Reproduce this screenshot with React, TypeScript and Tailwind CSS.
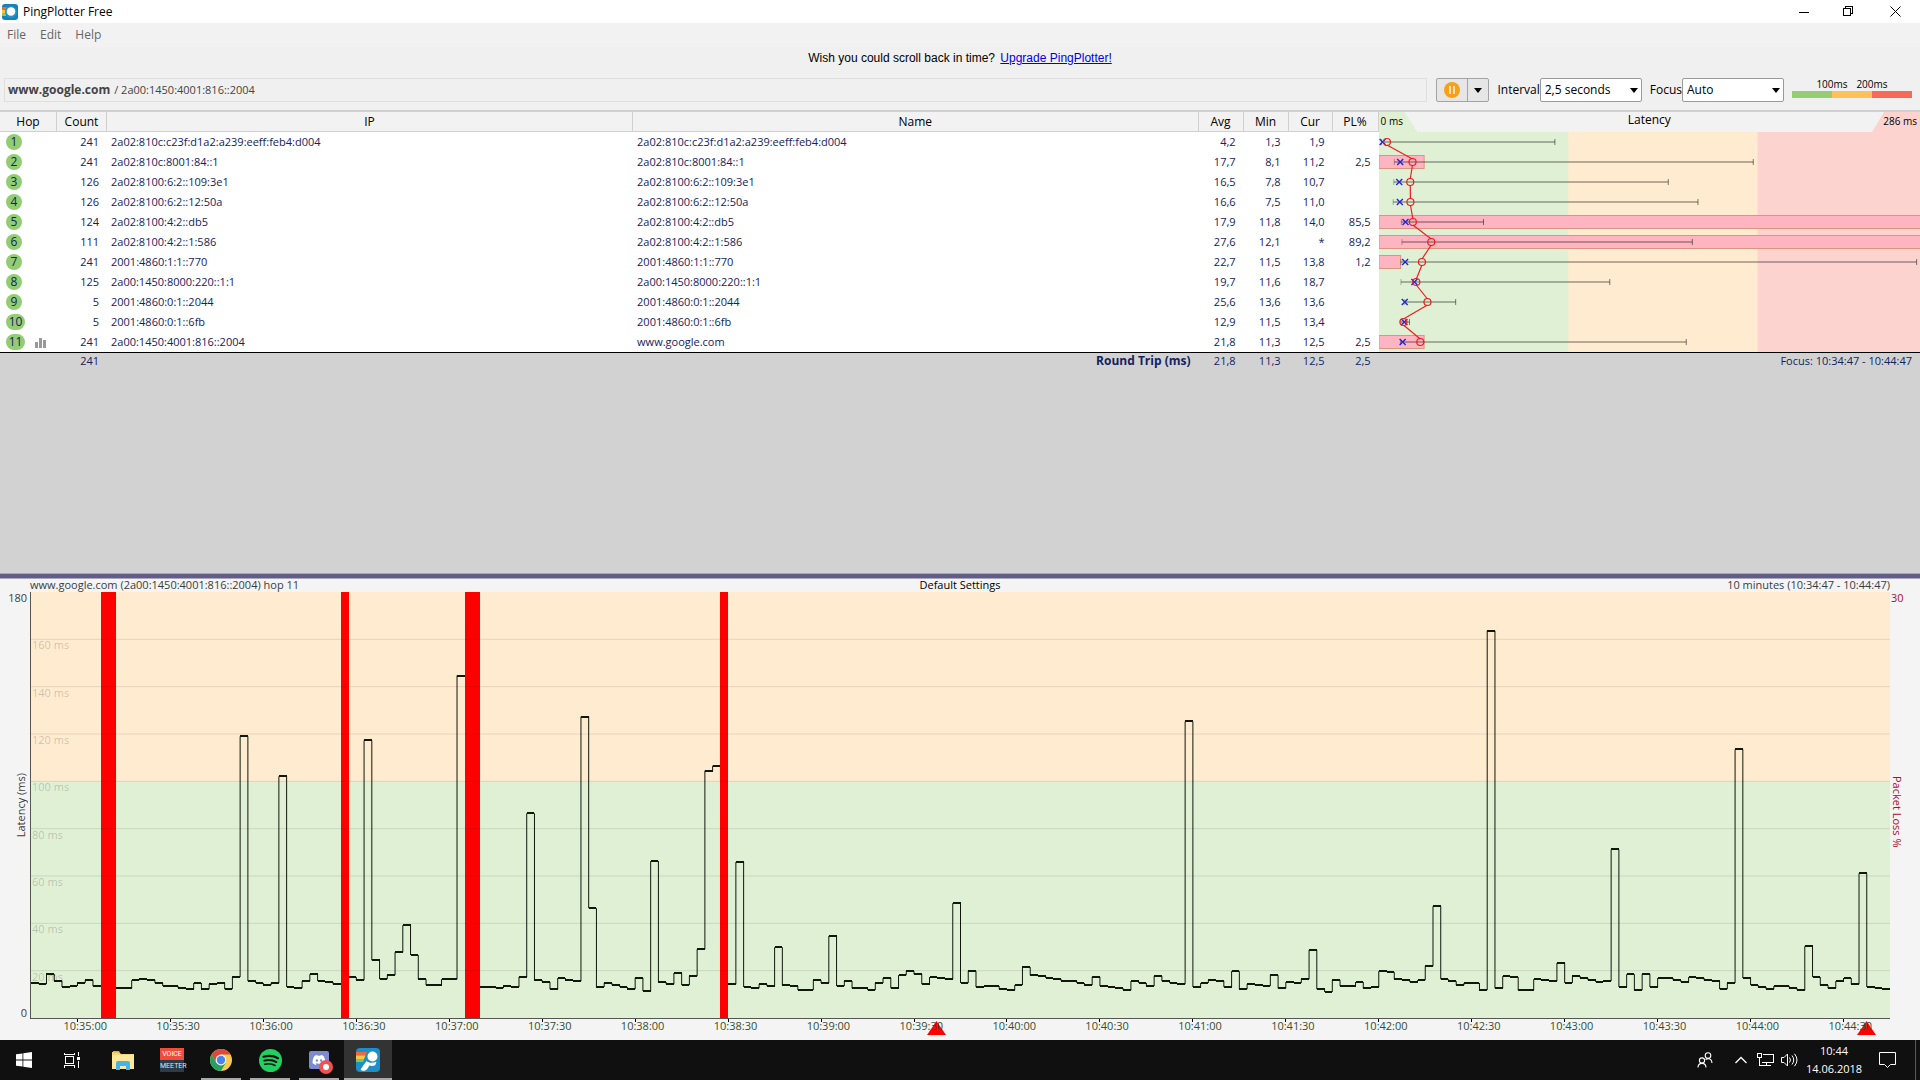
import React from "react";
import { FaDiscord } from "react-icons/fa";

const LOSS = -1;

// One latency value (ms) per 2.5 second sample, LOSS where the packet was lost.
const SAMPLES: number[] = [
  14.9, 14.3, 18.6, 15.7, 13.1, 13.5, 14.8, 16, 13.5, LOSS, LOSS, 12.6, 12.6, 16, 16.4, 16, 14.8, 13.5, 13.5, 12.6,
  12.2, 14.8, 12.2, 14.3, 14.8, 12.2, 17.3, 119, 15.6, 14.8, 13.9, 14.8, 102.1, 13.1, 12.6, 15.6, 18.5, 15.6, 15.2, 14.3,
  LOSS, 17.3, 16, 117.3, 24.4, 16.4, 18.1, 27.8, 39.2, 26.6, 16.4, 13.9, 13.9, 16.4, 16.4, 144.7, LOSS, LOSS, 13.1, 13.1,
  12.6, 13.5, 13.1, 17.3, 86.5, 16, 15.2, 12.2, 16.9, 16, 15.6, 127.3, 46.4, 13.1, 14.8, 13.9, 13.1, 12.2, 16.9, 11.4,
  66.3, 15.2, 14.3, 19, 13.9, 17.7, 29.1, 104.5, 106.6, LOSS, 14.3, 65.9, 13.1, 12.6, 14.3, 13.5, 29.9, 13.9, 13.5, 11.8,
  11.8, 16, 14.8, 34.7, 13.5, 15.6, 12.6, 12.6, 11.8, 14.8, 16.9, 12.6, 18.1, 19.8, 18.5, 14.3, 17.3, 16.9, 16.4, 48.5,
  14.8, 19.8, 13.1, 13.5, 13.5, 12.2, 11.8, 13.9, 21.5, 18.1, 17.7, 16.9, 16.4, 15.6, 15.6, 14.8, 13.9, 17.3, 13.5, 13.1,
  12.6, 11.8, 15.6, 14.8, 13.5, 17.7, 15.6, 14.8, 14.3, 125.3, 13.1, 14.8, 16, 15.6, 13.1, 19.8, 12.2, 14.3, 13.9, 13.5,
  18.1, 12.6, 15.2, 14.8, 16.4, 28.7, 12.2, 11, 16, 13.5, 13.5, 15.2, 12.6, 13.1, 19.8, 19.4, 16.4, 16, 15.2, 16,
  21.9, 47.2, 16.4, 15.6, 13.9, 14.8, 14.8, 11.8, 163.6, 12.6, 17.7, 17.3, 11.8, 11.8, 16.4, 16, 15.6, 23.2, 14.8, 17.7,
  16.9, 16, 15.2, 15.6, 71.2, 13.1, 18.5, 11.8, 18.5, 13.1, 16.9, 16.9, 16, 15.2, 17.3, 16.9, 16, 15.6, 12.2, 14.8,
  113.5, 16.9, 13.9, 13.1, 12.2, 13.5, 13.5, 12.6, 11.8, 30.3, 17.3, 13.9, 12.6, 15.6, 16.9, 14.3, 61.1, 13.1, 12.6, 12.2,
];

type Hop = {
  count: number;
  ip: string;
  name: string;
  avg: number;
  min: number;
  cur: number | null;
  pl: number;
  max: number;
};

const HOPS: Hop[] = [
  { count: 241, ip: "2a02:810c:c23f:d1a2:a239:eeff:feb4:d004", name: "2a02:810c:c23f:d1a2:a239:eeff:feb4:d004", avg: 4.2, min: 1.3, cur: 1.9, pl: 0, max: 92.9 },
  { count: 241, ip: "2a02:810c:8001:84::1", name: "2a02:810c:8001:84::1", avg: 17.7, min: 8.1, cur: 11.2, pl: 2.5, max: 197.7 },
  { count: 126, ip: "2a02:8100:6:2::109:3e1", name: "2a02:8100:6:2::109:3e1", avg: 16.5, min: 7.8, cur: 10.7, pl: 0, max: 152.8 },
  { count: 126, ip: "2a02:8100:6:2::12:50a", name: "2a02:8100:6:2::12:50a", avg: 16.6, min: 7.5, cur: 11, pl: 0, max: 168.5 },
  { count: 124, ip: "2a02:8100:4:2::db5", name: "2a02:8100:4:2::db5", avg: 17.9, min: 11.8, cur: 14, pl: 85.5, max: 55.2 },
  { count: 111, ip: "2a02:8100:4:2::1:586", name: "2a02:8100:4:2::1:586", avg: 27.6, min: 12.1, cur: null, pl: 89.2, max: 165.5 },
  { count: 241, ip: "2001:4860:1:1::770", name: "2001:4860:1:1::770", avg: 22.7, min: 11.5, cur: 13.8, pl: 1.2, max: 284 },
  { count: 125, ip: "2a00:1450:8000:220::1:1", name: "2a00:1450:8000:220::1:1", avg: 19.7, min: 11.6, cur: 18.7, pl: 0, max: 121.9 },
  { count: 5, ip: "2001:4860:0:1::2044", name: "2001:4860:0:1::2044", avg: 25.6, min: 13.6, cur: 13.6, pl: 0, max: 40.5 },
  { count: 5, ip: "2001:4860:0:1::6fb", name: "2001:4860:0:1::6fb", avg: 12.9, min: 11.5, cur: 13.4, pl: 0, max: 16.1 },
  { count: 241, ip: "2a00:1450:4001:816::2004", name: "www.google.com", avg: 21.8, min: 11.3, cur: 12.5, pl: 2.5, max: 162.3 },
];

const comma = (n: number) => n.toFixed(1).replace(".", ",");

function PingLogo({ size }: { size: number }) {
  return (
    <svg width={size} height={size} viewBox="0 0 24 24" aria-hidden="true">
      <rect width="24" height="24" rx="4" fill="#1b8fc6" />
      <path d="M0 4h11l-1.500 3.500H0z" fill="#ee6a3c" />
      <path d="M0 7.500h9.500L8 11H0z" fill="#f6c544" />
      <path d="M0 11h8l-1 3H0z" fill="#7fc466" />
      <circle cx="16.500" cy="8.500" r="5" fill="#fff" />
      <path d="M4.500 21.500L10.500 13c2 1.800 5.500 2.600 10 .8l-1.300 3.500c-2.200.9-4.200.9-6 .2-.9 2-1.700 3.600-3.200 4.500-1.800 1.200-4.200 1.200-5.500-.5z" fill="#fff" />
    </svg>
  );
}

function TitleLogo() {
  return (
    <svg width="16" height="16" viewBox="0 0 16 16" aria-hidden="true">
      <rect width="16" height="16" rx="3" fill="#1583b8" />
      <path d="M0 3h5v3H0z" fill="#f0673a" />
      <path d="M0 6h4v3H0z" fill="#f6c544" />
      <path d="M0 9h4v3H0z" fill="#8cc668" />
      <circle cx="9" cy="8" r="6" fill="#1f95c9" />
      <circle cx="9" cy="7.500" r="4.300" fill="#fff" />
    </svg>
  );
}

function TitleBar() {
  return (
    <header className="flex h-[23px] items-center bg-white pl-0.5 text-[12px] text-black">
      <TitleLogo />
      <h1 className="ml-[5px] font-normal">PingPlotter Free</h1>
      <div className="ml-auto flex h-full">
        <button aria-label="Minimize" className="flex w-[45px] items-center justify-center">
          <svg width="10" height="10" viewBox="0 0 10 10" stroke="#000" fill="none" shapeRendering="crispEdges"><path d="M0 5.500h10" /></svg>
        </button>
        <button aria-label="Restore" className="flex w-[45px] items-center justify-center">
          <svg width="11" height="11" viewBox="0 0 11 11" stroke="#000" fill="none" shapeRendering="crispEdges"><path d="M.5 2.500h7v7h-7zM2.500 2.500v-2h7v7h-2" /></svg>
        </button>
        <button aria-label="Close" className="flex w-[49px] items-center justify-center">
          <svg width="11" height="11" viewBox="0 0 11 11" stroke="#000" fill="none"><path d="M.5.5l10 10M10.500.5l-10 10" /></svg>
        </button>
      </div>
    </header>
  );
}

function Caret() {
  return (
    <svg width="8" height="5" viewBox="0 0 8 5" aria-hidden="true"><path d="M0 0h8L4 5z" fill="#000" /></svg>
  );
}

function DropDown({ id, label, value }: { id: string; label: string; value: string }) {
  return (
    <div className="flex items-center">
      <label htmlFor={id}>{label}</label>
      <div className="relative flex items-center">
        <select id={id} defaultValue={value} className="h-6 w-[102px] appearance-none rounded-xs border border-[#9a9a9a] bg-white pl-1 text-[12px]">
          <option>{value}</option>
        </select>
        <span className="pointer-events-none absolute right-1"><Caret /></span>
      </div>
    </div>
  );
}

function Toolbar() {
  return (
    <div className="flex h-8 items-start pl-1 pr-2 text-[12px] text-black">
      <div className="flex h-6 flex-1 items-center border border-[#dfdfdf] px-[3px] text-[#444]">
        <strong className="mr-1">www.google.com</strong><span className="text-[11px]">/ 2a00:1450:4001:816::2004</span>
      </div>
      <div className="ml-[9px] flex h-6 rounded-xs border border-[#a3a3a3] bg-[#e6e6e6]">
        <button aria-label="Pause" className="flex w-[31px] items-center justify-center border-r border-[#a3a3a3]">
          <svg width="16" height="16" viewBox="0 0 16 16">
            <circle cx="8" cy="8" r="8" fill="#f7a11a" />
            <path d="M5 4h2v8H5zM9 4h2v8H9z" fill="#fbe3b8" />
          </svg>
        </button>
        <button aria-label="Pause options" className="flex w-5 items-center justify-center"><Caret /></button>
      </div>
      <div className="ml-2 flex gap-2">
        <DropDown id="interval" label="Interval" value="2,5 seconds" />
        <DropDown id="focus" label="Focus" value="Auto" />
      </div>
      <div className="ml-2 w-[120px] text-[10px] leading-[13px]">
        <div className="flex justify-center"><span className="w-10 text-center">100ms</span><span className="w-10 text-center">200ms</span></div>
        <div className="flex h-[7px]">
          <i className="flex-1 bg-[#95cc75]" /><i className="flex-1 bg-[#fcc158]" /><i className="flex-1 bg-[#f66a57]" />
        </div>
      </div>
    </div>
  );
}

const pctMs = (ms: number) => `${(ms / 286) * 100}%`;
const rowY = (i: number) => i * 20 + 10;

function HopGraph() {
  return (
    <svg className="block h-[220px] w-full" role="img" aria-label="Latency per hop">
      <rect width="100%" height="220" fill="#dff0d5" />
      <rect x={pctMs(100)} width={pctMs(100)} height="220" fill="#ffebcf" />
      <rect x={pctMs(200)} width={pctMs(86)} height="220" fill="#fdd3d0" />
      {HOPS.map((h, i) => h.pl > 0 && (
        <rect key={i} x="0" y={rowY(i) - 6.5} height="13" width={h.pl > 30 ? "101%" : `${(h.pl / 30) * 100}%`} fill="#ffb5c1" stroke="#db9480" />
      ))}
      {HOPS.map((h, i) => (
        <g key={i} stroke="#000" strokeOpacity="0.28">
          <line x1={pctMs(h.min)} x2={pctMs(h.max)} y1={rowY(i)} y2={rowY(i)} strokeWidth="2" />
          <line x1={pctMs(h.min)} x2={pctMs(h.min)} y1={rowY(i) - 3} y2={rowY(i) + 3} />
          <line x1={pctMs(h.max)} x2={pctMs(h.max)} y1={rowY(i) - 3} y2={rowY(i) + 3} strokeOpacity="0.5" />
        </g>
      ))}
      {HOPS.map((h, i) => (
        <g key={i}>
          {h.cur !== null && (
            <svg x={pctMs(h.cur)} y={rowY(i)} overflow="visible">
              <path d="M-3-3l6 6M3-3l-6 6" stroke="#2424d8" strokeWidth="1.400" />
            </svg>
          )}
          <circle cx={pctMs(h.avg)} cy={rowY(i)} r="3.500" fill="none" stroke="#f21c1c" strokeWidth="1.200" />
          {i > 0 && <line x1={pctMs(HOPS[i - 1].avg)} y1={rowY(i - 1) + 3} x2={pctMs(h.avg)} y2={rowY(i) - 3} stroke="#f21c1c" strokeWidth="1.200" />}
        </g>
      ))}
    </svg>
  );
}

function TraceTable() {
  const th = "border-r border-b border-[#d0d0d0] p-0 text-center font-normal";
  return (
    <table className="w-full table-fixed border-separate border-spacing-0 text-[11px] leading-5 text-[#14225e]">
      <colgroup>
        <col className="w-[57px]" /><col className="w-[50px]" /><col className="w-[27.4%]" /><col />
        <col className="w-[45px]" /><col className="w-[45px]" /><col className="w-[44px]" /><col className="w-[46px]" />
        <col className="w-[28.200%]" />
      </colgroup>
      <thead>
        <tr className="h-5 bg-[#f2f2f2] text-[12px] leading-[18px] text-black">
          <th scope="col" className={th}>Hop</th>
          <th scope="col" className={th}>Count</th>
          <th scope="col" className={th}>IP</th>
          <th scope="col" className={th}>Name</th>
          <th scope="col" className={th}>Avg</th>
          <th scope="col" className={th}>Min</th>
          <th scope="col" className={th}>Cur</th>
          <th scope="col" className={th}>PL%</th>
          <th scope="col" className="p-0 font-normal">
            <div className="flex h-5 items-stretch justify-between">
              <span className="w-12 bg-[#dff0d5] pl-0.5 text-left text-[10px] [clip-path:polygon(0_0,26px_0,39px_100%,0_100%)]">0 ms</span>
              <span className="leading-4">Latency</span>
              <span className="w-12 bg-[#fdd3d0] pr-[3px] text-right text-[10px] [clip-path:polygon(12px_0,100%_0,100%_100%,0_100%)]">286 ms</span>
            </div>
          </th>
        </tr>
      </thead>
      <tbody className="bg-white">
        {HOPS.map((h, i) => (
          <tr key={i} className="h-5">
            <td className="p-0">
              <div className="flex h-5 items-center pl-1.5">
                <span className={`flex h-4 items-center justify-center rounded-full bg-[#92cd74] text-[12px] leading-4 ${i > 8 ? "w-[19px]" : "w-4"}`}>{i + 1}</span>
                {i === 10 && (
                  <svg className="ml-2.5" width="11" height="11" viewBox="0 0 11 11" fill="#999" shapeRendering="crispEdges" aria-hidden="true"><path d="M0 5h3v6H0zM4 1h3v10H4zM8 3h3v8H8z" /></svg>
                )}
              </div>
            </td>
            <td className="p-0 pr-2 text-right">{h.count}</td>
            <td className="p-0 pl-1">{h.ip}</td>
            <td className="p-0 pl-1">{h.name}</td>
            <td className="p-0 pr-2 text-right">{comma(h.avg)}</td>
            <td className="p-0 pr-2 text-right">{comma(h.min)}</td>
            <td className="p-0 pr-2 text-right">{h.cur === null ? "*" : comma(h.cur)}</td>
            <td className="p-0 pr-2 text-right">{h.pl > 0 ? comma(h.pl) : ""}</td>
            {i === 0 && <td rowSpan={11} className="p-0"><HopGraph /></td>}
          </tr>
        ))}
      </tbody>
      <tfoot>
        <tr className="leading-4 *:border-t *:border-black">
          <td />
          <td className="p-0 pr-2 text-right">241</td>
          <td />
          <td className="p-0 pr-2 text-right text-[12px] font-bold">Round Trip (ms)</td>
          <td className="p-0 pr-2 text-right">21,8</td>
          <td className="p-0 pr-2 text-right">11,3</td>
          <td className="p-0 pr-2 text-right">12,5</td>
          <td className="p-0 pr-2 text-right">2,5</td>
          <td className="p-0 pr-2 text-right">Focus: 10:34:47 - 10:44:47</td>
        </tr>
      </tfoot>
    </table>
  );
}

const GRID = [160, 140, 120, 100, 80, 60, 40, 20];
const N = SAMPLES.length;
const level = (ms: number) => 180 - ms;

let flatPath = "";
let risePath = "";
SAMPLES.forEach((v, i) => {
  if (v === LOSS) return;
  flatPath += `M${i} ${level(v)}H${i + 1}`;
  const next = SAMPLES[i + 1];
  if (next !== undefined && next !== LOSS) risePath += `M${i + 1} ${level(v)}V${level(next)}`;
});

const TIMES = Array.from({ length: 20 }, (_, i) => {
  const s = 35 * 60 + i * 30;
  return {
    label: `10:${Math.floor(s / 60)}:${s % 60 === 0 ? "00" : "30"}`,
    left: `${((i * 30 + 15) / 600) * 100}%`,
  };
});
const MARKS = ["48.700%", "98.750%"];

function Timeline() {
  return (
    <section className="flex min-h-[300px] flex-1 basis-0 flex-col bg-[#f4f4f4] text-[11px] text-[#3c3c3c]">
      <div className="grid h-[13px] grid-cols-3 px-[30px] leading-[11px]">
        <span>www.google.com (2a00:1450:4001:816::2004) hop 11</span>
        <span className="text-center text-black">Default Settings</span>
        <span className="text-right">10 minutes (10:34:47 - 10:44:47)</span>
      </div>
      <div className="flex flex-1">
        <div className="flex w-[30px] flex-col items-end justify-between pr-[3px] leading-3">
          <span>180</span>
          <span className="rotate-180 [writing-mode:vertical-rl]">Latency (ms)</span>
          <span>0</span>
        </div>
        <div className="relative flex-1 border-b border-l border-[#555]">
          <svg className="absolute inset-0 h-full w-full" viewBox={`0 0 ${N} 180`} preserveAspectRatio="none" role="img" aria-label="Latency over time">
            <rect width={N} height="80" fill="#ffebcf" />
            <rect y="80" width={N} height="100" fill="#dff0d5" />
            <g shapeRendering="crispEdges">
              {SAMPLES.map((v, i) => v === LOSS && <rect key={i} x={i} width="1" height="180" fill="#f00" />)}
            </g>
            <g fill="none" stroke="#10180c" shapeRendering="crispEdges">
              <path d={flatPath} strokeWidth="2" vectorEffect="non-scaling-stroke" />
              <path d={risePath} strokeWidth="1" vectorEffect="non-scaling-stroke" />
            </g>
            {GRID.map((g) => (
              <path key={g} d={`M0 ${level(g)}H${N}`} stroke="#000" strokeOpacity="0.1" vectorEffect="non-scaling-stroke" shapeRendering="crispEdges" />
            ))}
          </svg>
          {GRID.map((g) => (
            <span key={g} className="absolute left-px leading-3 text-black/20" style={{ top: `${(level(g) / 180) * 100}%` }}>{g} ms</span>
          ))}
        </div>
        <div className="flex w-[30px] flex-col items-start justify-between pl-px leading-3 text-[#b01020]">
          <span>30</span>
          <span className="[writing-mode:vertical-rl]">Packet Loss %</span>
          <span />
        </div>
      </div>
      <div className="px-[31px]">
        <div className="relative h-[21px] text-[#33502f]">
          {MARKS.map((m) => (
            <svg key={m} className="absolute top-0.5 -ml-[9px]" style={{ left: m }} width="19" height="14" viewBox="0 0 19 14" aria-hidden="true">
              <path d="M9.500 0L19 14H0z" fill="#f00" />
            </svg>
          ))}
          {TIMES.map((t) => (
            <div key={t.label} className="absolute top-0" style={{ left: t.left }}>
              <span className="absolute left-0 top-0 h-[3px] w-px bg-black" />
              <span className="absolute -left-[14px] top-px leading-3">{t.label}</span>
            </div>
          ))}
        </div>
      </div>
    </section>
  );
}

function TaskButton({ label, open, active, children }: { label: string; open?: boolean; active?: boolean; children: React.ReactNode }) {
  return (
    <button aria-label={label} className={`relative flex h-10 w-12 items-center justify-center ${active ? "bg-[#333]" : ""}`}>
      {children}
      {open && <span className={`absolute bottom-0 h-0.5 bg-[#aba8a8] ${active ? "w-12" : "w-10"}`} />}
    </button>
  );
}

function Taskbar() {
  return (
    <footer className="flex h-10 items-center bg-[#101010] text-white">
      <div className="flex">
        <TaskButton label="Start">
          <svg width="16" height="16" viewBox="0 0 16 16" fill="#fff"><path d="M0 2.300L6.500 1.400v6.200H0zM7.300 1.300L16 0v7.600H7.300zM0 8.400h6.500v6.200L0 13.700zM7.300 8.400H16V16l-8.700-1.300z" /></svg>
        </TaskButton>
        <TaskButton label="Task View">
          <svg width="17" height="16" viewBox="0 0 17 16" fill="none" stroke="#fff" shapeRendering="crispEdges"><path d="M1.500 4.500h8v7h-8zM.5.5v2h10v-2M.5 15.500v-2h10v2M14.500 0v4M14.500 9v7" /><path d="M13 5h3v3h-3z" fill="#fff" stroke="none" /></svg>
        </TaskButton>
      </div>
      <div className="ml-[3px] flex gap-px">
        <TaskButton label="File Explorer">
          <svg width="22" height="19" viewBox="0 0 22 19"><path d="M0 1h7l2 2h13v15H0z" fill="#f6d778" /><path d="M1 0h6l1 1.500H1z" fill="#e5a93c" /><path d="M0 4h22v14H0z" fill="#fde79b" /><path d="M4 19v-7q0-2 2-2h10q2 0 2 2v7h-4v-4H8v4z" fill="#45b5e8" /></svg>
        </TaskButton>
        <TaskButton label="Voicemeeter">
          <span className="flex w-6 flex-col text-center font-['Roboto',sans-serif] text-[7px] leading-3"><span className="bg-[#ef4d3c]">VOICE</span><span className="bg-[#2b3b4a] text-[#dfe5ea]">MEETER</span></span>
        </TaskButton>
        <TaskButton label="Google Chrome" open>
          <svg width="22" height="22" viewBox="0 0 22 22">
            <circle cx="11" cy="11" r="11" fill="#fbc94b" />
            <path d="M1.500 5.500A11 11 0 0 1 20.500 5.500H11L6.200 13.700z" fill="#dc4a3d" />
            <path d="M1.500 5.500A11 11 0 0 0 11 22L15.800 13.700 11 16 6.200 13.700z" fill="#1ea362" />
            <circle cx="11" cy="11" r="5.400" fill="#f4f4f4" />
            <circle cx="11" cy="11" r="4.200" fill="#4a83f0" />
          </svg>
        </TaskButton>
        <TaskButton label="Spotify" open>
          <svg width="23" height="23" viewBox="0 0 23 23"><circle cx="11.500" cy="11.500" r="11.500" fill="#1fd25f" /><g fill="none" stroke="#101010" strokeLinecap="round"><path d="M4.500 7.800c5-1.400 10.500-.9 14.500 1.400" strokeWidth="2.200" /><path d="M5.200 11.700c4.200-1.200 8.700-.7 12.300 1.400" strokeWidth="1.800" /><path d="M5.800 15.300c3.600-.9 7.200-.6 10.300 1.200" strokeWidth="1.500" /></g></svg>
        </TaskButton>
        <TaskButton label="Discord" open>
          <span className="relative flex h-[18px] w-5 items-center justify-center rounded-xs bg-[#7d8bd0]">
            <FaDiscord size={14} />
            <svg className="absolute -bottom-[5px] -right-1" width="14" height="14" viewBox="0 0 14 14"><circle cx="7" cy="7" r="7" fill="#ee5253" /><circle cx="7" cy="7" r="3" fill="#fff" /></svg>
          </span>
        </TaskButton>
        <TaskButton label="PingPlotter" open active><PingLogo size={24} /></TaskButton>
      </div>
      <div className="ml-auto flex h-full items-center">
        <button aria-label="People" className="flex w-12 justify-center">
          <svg width="16" height="16" viewBox="0 0 16 16" fill="none" stroke="#fff" strokeWidth="1.100"><circle cx="11" cy="3.500" r="2.800" /><circle cx="5" cy="8.500" r="2.600" /><path d="M1 15.500c0-5.500 8-5.500 8 0M8.500 7.500c3-2 6.500-.5 6.500 3.500" /></svg>
        </button>
        <button aria-label="Show hidden icons" className="flex w-6 justify-center">
          <svg width="12" height="8" viewBox="0 0 12 8" fill="none" stroke="#fff" strokeWidth="1.300"><path d="M.5 7L6 1.500 11.500 7" /></svg>
        </button>
        <button aria-label="Network" className="flex w-6 justify-center">
          <svg width="17" height="14" viewBox="0 0 17 14" fill="none" stroke="#fff" shapeRendering="crispEdges"><path d="M5.500 1.500h11v8h-12M9.500 10v3M6 12.500h8M.5.5h4v4h-4zM2.500 5v7.500H6" /></svg>
        </button>
        <button aria-label="Volume" className="flex w-6 justify-center">
          <svg width="17" height="14" viewBox="0 0 17 14" fill="none" stroke="#fff"><path d="M.5 4.500h2.500l3.500-3.500v12L3 9.500H.5zM8.500 4.500q2 2.500 0 5M11 2.500q3.500 4.500 0 9M13.500.8q5 6.200 0 12.400" /></svg>
        </button>
        <time className="w-[66px] text-center text-[11px] leading-[18px]">10:44<br />14.06.2018</time>
        <button aria-label="Notifications" className="flex w-10 justify-center">
          <svg width="17" height="16" viewBox="0 0 17 16" fill="none" stroke="#fff"><path d="M.5.5h16v12h-5l-3 3-3-3h-5z" /></svg>
        </button>
        <span className="ml-2 mr-1 h-full w-px bg-[#5a5a5a]" />
      </div>
    </footer>
  );
}

export default function App() {
  return (
    <div className="flex min-h-screen flex-col bg-[#f0f0f0] font-['Open_Sans',sans-serif]">
      <TitleBar />
      <nav className="flex h-6 items-center gap-[14px] bg-[#f2f2f2] pl-[7px] text-[12px] text-[#666]">
        <button>File</button>
        <button>Edit</button>
        <button>Help</button>
      </nav>
      <p className="h-[31px] text-center font-['Liberation_Sans',sans-serif] text-[12px] leading-[22px] text-black">
        Wish you could scroll back in time?{" "}
        <a href="#upgrade" className="ml-0.5 text-[#0000e0] underline">Upgrade PingPlotter!</a>
      </p>
      <Toolbar />
      <main className="flex flex-1 flex-col border-t-2 border-[#d0d0d0]">
        <section className="flex-1 basis-0 bg-[#d2d2d2]"><TraceTable /></section>
        <div className="h-1.5 border-y border-[#a9a7bd] bg-[#625d87]" />
        <Timeline />
      </main>
      <Taskbar />
    </div>
  );
}
